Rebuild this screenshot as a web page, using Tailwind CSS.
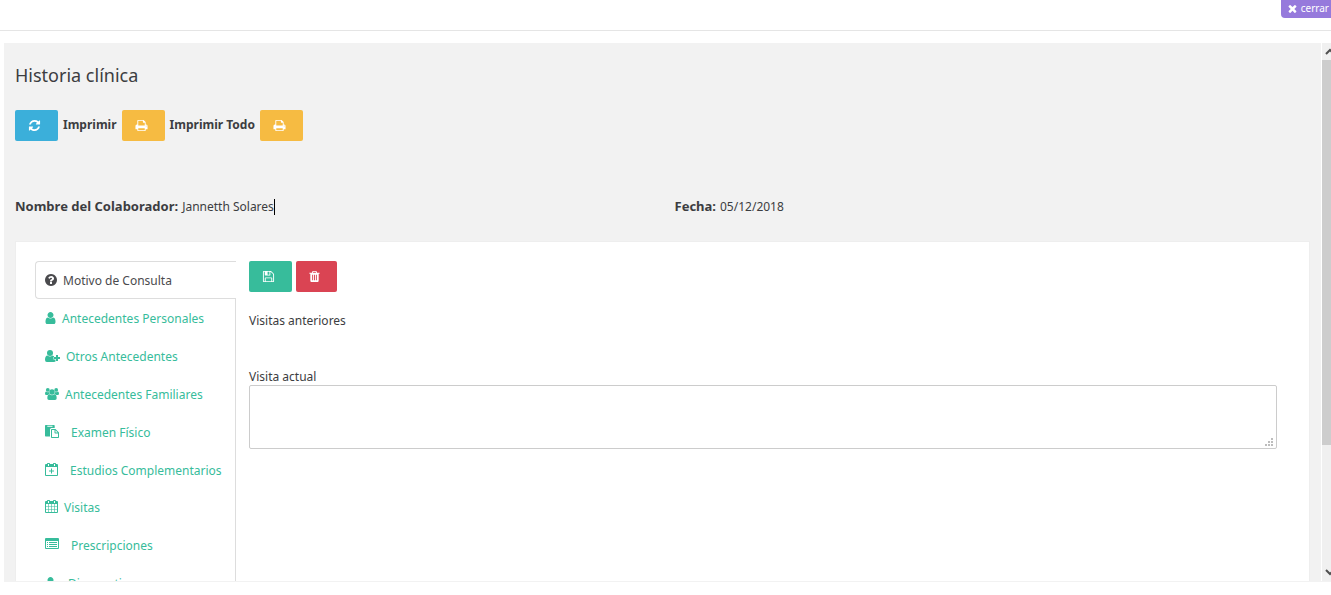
<!DOCTYPE html>
<html lang="es">
<head>
  <meta charset="UTF-8">
  <meta name="viewport" content="width=device-width, initial-scale=1.0">
  <title>Historia clínica</title>
  <script src="https://cdn.jsdelivr.net/npm/@tailwindcss/browser@4"></script>
</head>
<body class="bg-white h-screen overflow-hidden font-['Noto_Sans',sans-serif] text-xs leading-5 text-[#3c3d41]">
  <!-- Barra superior -->
  <header class="flex justify-end items-start h-[31px] border-b border-[#e5e5e5]">
    <button type="button" class="flex items-center gap-1 h-[18px] pb-0.5 pl-[7px] pr-0.5 rounded-bl-sm bg-[#967adc] text-white text-[10px] leading-4">
      <svg class="size-[9px]" viewBox="220 220 1352 1352" fill="currentColor" aria-hidden="true"><path d="M1490 1322q0 40-28 68l-136 136q-28 28-68 28t-68-28l-294-294-294 294q-28 28-68 28t-68-28l-136-136q-28-28-28-68t28-68l294-294-294-294q-28-28-28-68t28-68l136-136q28-28 68-28t68 28l294 294 294-294q28-28 68-28t68 28l136 136q28 28 28 68t-28 68l-294 294 294 294q28 28 28 68z"/></svg>
      cerrar
    </button>
  </header>

  <div class="flex mt-3 ml-1 h-[calc(100vh-56px)] overflow-hidden border-b border-[#f2f2f2]">
    <!-- Contenido -->
    <main class="flex-1 min-w-0 bg-[#f2f2f2] px-[11px] pt-5">
      <h1 class="text-lg leading-6">Historia clínica</h1>

      <div class="flex items-center gap-[5px] mt-[23px] font-bold">
        <button type="button" aria-label="Actualizar" class="flex items-center h-[31px] w-[43px] pl-[13px] rounded-xs bg-[#3bafda] text-white">
          <svg class="size-[13px]" viewBox="0 0 1792 1792" fill="currentColor" aria-hidden="true"><path d="M1639 1056q0 5-1 7-64 268-268 434.500t-478 166.500q-146 0-282.500-55t-243.500-157l-129 129q-19 19-45 19t-45-19-19-45v-448q0-26 19-45t45-19h448q26 0 45 19t19 45-19 45l-137 137q71 66 161 102t187 36q134 0 250-65t186-179q11-17 53-117 8-23 30-23h192q13 0 22.500 9.500t9.500 22.500zm25-800v448q0 26-19 45t-45 19h-448q-26 0-45-19t-19-45 19-45l138-138q-148-137-349-137-134 0-250 65t-186 179q-11 17-53 117-8 23-30 23h-199q-13 0-22.500-9.500t-9.500-22.500v-7q65-268 270-434.500t480-166.500q146 0 284 55.500t245 156.500l130-129q19-19 45-19t45 19 19 45z"/></svg>
        </button>
        <span class="pb-0.5">Imprimir</span>
        <button type="button" aria-label="Imprimir" class="flex items-center h-[31px] w-[43px] pl-[13px] rounded-xs bg-[#f6bb42] text-white">
          <svg class="size-[13px]" viewBox="0 0 1792 1792" fill="currentColor" aria-hidden="true"><path d="M448 1536h896v-256h-896v256zm0-640h896v-384h-160q-40 0-68-28t-28-68v-160h-640v640zm1152 64q0-26-19-45t-45-19-45 19-19 45 19 45 45 19 45-19 19-45zm128 0v416q0 13-9.500 22.500t-22.500 9.500h-224v160q0 40-28 68t-68 28h-960q-40 0-68-28t-28-68v-160h-224q-13 0-22.500-9.500t-9.500-22.500v-416q0-79 56.500-135.500t135.500-56.500h64v-544q0-40 28-68t68-28h672q40 0 88 20t76 48l152 152q28 28 48 76t20 88v256h64q79 0 135.500 56.500t56.500 135.500z"/></svg>
        </button>
        <span class="pb-0.5">Imprimir Todo</span>
        <button type="button" aria-label="Imprimir todo" class="flex items-center h-[31px] w-[43px] pl-[13px] rounded-xs bg-[#f6bb42] text-white">
          <svg class="size-[13px]" viewBox="0 0 1792 1792" fill="currentColor" aria-hidden="true"><path d="M448 1536h896v-256h-896v256zm0-640h896v-384h-160q-40 0-68-28t-28-68v-160h-640v640zm1152 64q0-26-19-45t-45-19-45 19-19 45 19 45 45 19 45-19 19-45zm128 0v416q0 13-9.500 22.500t-22.500 9.500h-224v160q0 40-28 68t-68 28h-960q-40 0-68-28t-28-68v-160h-224q-13 0-22.500-9.500t-9.500-22.500v-416q0-79 56.500-135.500t135.500-56.500h64v-544q0-40 28-68t68-28h672q40 0 88 20t76 48l152 152q28 28 48 76t20 88v256h64q79 0 135.500 56.500t56.500 135.500z"/></svg>
        </button>
      </div>

      <div class="grid grid-cols-2 -mr-6 mt-[55px]">
        <p class="flex items-baseline gap-1"><strong class="text-[13px]">Nombre del Colaborador:</strong><span class="border-r border-black leading-4">Jannetth Solares</span></p>
        <p class="flex items-baseline gap-1"><strong class="text-[13px]">Fecha:</strong><span>05/12/2018</span></p>
      </div>

      <!-- Ficha -->
      <section class="flex mt-6 h-[500px] bg-white border border-[#eeeeee] pt-[19px] pl-[19px] pr-8">
        <nav class="w-[201px] shrink-0 border-r border-[#dddddd] text-[#37bc9b] whitespace-nowrap">
          <a href="#motivo" class="relative flex items-center gap-1.5 h-[38px] -mr-px pt-0.5 pl-[9px] border border-r-0 border-[#dddddd] rounded-l-sm bg-white text-[#4a4a4d]">
            <svg class="w-3 h-3 mb-0.5" viewBox="128 128 1536 1536" fill="currentColor" aria-hidden="true"><path d="M1024 1376v-192q0-14-9-23t-23-9h-192q-14 0-23 9t-9 23v192q0 14 9 23t23 9h192q14 0 23-9t9-23zm256-672q0-88-55.500-163t-138.500-116-170-41q-243 0-371 213-15 24 8 42l132 100q7 6 19 6 16 0 25-12 53-68 86-92 34-24 86-24 48 0 85.500 26t37.500 59q0 38-20 61t-68 45q-63 28-115.500 86.500t-52.500 125.500v36q0 14 9 23t23 9h192q14 0 23-9t9-23q0-19 21.500-49.500t54.500-49.500q32-18 49-28.500t46-35 44.500-48 28-60.500 12.500-81zm384 192q0 209-103 385.500t-279.500 279.500-385.500 103-385.500-103-279.500-279.500-103-385.500 103-385.500 279.500-279.500 385.500-103 385.500 103 279.500 279.500 103 385.500z"/></svg>
            Motivo de Consulta
          </a>
          <a href="#personales" class="flex items-center gap-1.5 h-[38px] pt-0.5 pl-2.5">
            <svg class="w-[11px] h-3 mb-0.5" viewBox="256 128 1280 1536" fill="currentColor" aria-hidden="true"><path d="M1536 1399q0 109-62.500 187t-150.500 78h-854q-88 0-150.500-78t-62.500-187q0-85 8.500-160.500t31.500-152 58.500-131 94-89 134.500-34.500q131 128 313 128t313-128q76 0 134.500 34.500t94 89 58.500 131 31.500 152 8.500 160.500zm-256-887q0 159-112.500 271.500t-271.500 112.500-271.500-112.500-112.500-271.500 112.500-271.500 271.500-112.500 271.500 112.500 112.500 271.500z"/></svg>
            Antecedentes Personales
          </a>
          <a href="#otros" class="flex items-center gap-1.5 h-[38px] pt-0.5 pl-2.5">
            <svg class="w-[15px] h-3 mb-0.5" viewBox="0 0 15 12" fill="currentColor" aria-hidden="true"><circle cx="5" cy="3" r="3"/><path d="M2.500 5.500Q5 7.600 7.500 5.500L9 6.200V7H8.500V9.500H10.500V11.600Q10 12 9 12H1.800Q0 12 0 9.800 0 5.700 2.500 5.500Z"/><path d="M11 5h2v2h2v2h-2v2h-2V9H9V7h2z"/></svg>
            Otros Antecedentes
          </a>
          <a href="#familiares" class="flex items-center gap-1.5 h-[38px] pt-0.5 pl-2.5">
            <svg class="w-3.5 h-3 mb-0.5" viewBox="0 0 14 12" fill="currentColor" aria-hidden="true"><circle cx="2.800" cy="1.900" r="1.900"/><circle cx="11.200" cy="1.900" r="1.900"/><circle cx="7" cy="4" r="2.700"/><path d="M1 3.500Q2.500 4.700 4 4 4.100 5.300 4.700 6 3.500 6.100 3 7H1.300Q0 7 0 5.800 0 3.800 1 3.500ZM13 3.500Q11.500 4.700 10 4 9.900 5.300 9.300 6 10.500 6.100 11 7h1.700Q14 7 14 5.800 14 3.800 13 3.500Z"/><path d="M4.700 6.200Q7 8.200 9.300 6.200 11.700 6.400 11.700 10.200 11.700 12 10 12H4Q2.300 12 2.300 10.200 2.300 6.400 4.700 6.200Z"/></svg>
            Antecedentes Familiares
          </a>
          <a href="#examen" class="flex items-center gap-3 h-[38px] pt-0.5 pl-2.5">
            <svg class="size-3.5 mb-0.5" viewBox="0 0 14 14" fill="currentColor" aria-hidden="true"><path fill-rule="evenodd" d="M.7 0H9q.7 0 .7.700V3H6.500Q5 3 5 4.500V11.500H.7Q0 11.500 0 10.800V.7Q0 0 .7 0ZM2.300.8v1h5.200v-1z"/><path fill-rule="evenodd" d="M6.700 4H10.500L14 7.500V12.300Q14 13 13.300 13H6.700Q6 13 6 12.300V4.700Q6 4 6.700 4ZM7 5V12H13V8.500H10.200Q9.500 8.500 9.500 7.800V5ZM10.500 5.300V7.500H12.700Z"/></svg>
            Examen Físico
          </a>
          <a href="#estudios" class="flex items-center gap-3 h-[37px] pt-0.5 pl-2.5">
            <svg class="w-[13px] h-3.5 mb-0.5" viewBox="0 0 13 14" fill="currentColor" aria-hidden="true"><path fill-rule="evenodd" d="M2 .8Q2 0 2.800 0h1.400q.8 0 .8.800V1h3V.8Q8 0 8.800 0h1.400q.8 0 .8.800V1h1q1 0 1 1v10q0 1-1 1H1q-1 0-1-1V2q0-1 1-1h1ZM3 1V3h1V1ZM9 1V3h1V1ZM1 4v8h11V4Z"/><path d="M6 5.500h1v2h2v1H7v2H6v-2H4v-1h2z"/></svg>
            Estudios Complementarios
          </a>
          <a href="#visitas" class="flex items-center gap-1.5 h-[38px] pt-0.5 pl-2.5">
            <svg class="w-[13px] h-3.5 mb-0.5" viewBox="0 0 13 14" fill="currentColor" aria-hidden="true"><path fill-rule="evenodd" d="M2 .8Q2 0 2.800 0h1.400q.8 0 .8.800V1h3V.8Q8 0 8.800 0h1.400q.8 0 .8.800V1h1q1 0 1 1v10q0 1-1 1H1q-1 0-1-1V2q0-1 1-1h1ZM3 1V3h1V1ZM9 1V3h1V1ZM1 4v2h2.200V4ZM3.800 4v2h2.400V4ZM6.800 4v2h2.400V4ZM9.800 4v2H12V4ZM1 6.600v2.400h2.200V6.600ZM3.800 6.600v2.400h2.400V6.600ZM6.800 6.600v2.400h2.400V6.600ZM9.800 6.600v2.400H12V6.600ZM1 9.600V12h2.200v-2.400ZM3.800 9.600V12h2.400v-2.400ZM6.800 9.600V12h2.400v-2.400ZM9.800 9.600V12H12v-2.400Z"/></svg>
            Visitas
          </a>
          <a href="#prescripciones" class="flex items-center gap-3 h-[38px] pt-0.5 pl-2.5">
            <svg class="size-3.5 mb-0.5" viewBox="0 0 14 14" fill="currentColor" aria-hidden="true"><path fill-rule="evenodd" d="M1 0h12q1 0 1 1v9q0 1-1 1H1q-1 0-1-1V1Q0 0 1 0ZM1 3v7h12V3Z"/><path d="M2 4h1v1H2zM4 4h8v1H4zM2 6h1v1H2zM4 6h8v1H4zM2 8h1v1H2zM4 8h8v1H4z"/></svg>
            Prescripciones
          </a>
          <a href="#diagnosticos" class="flex items-center gap-3 h-[38px] pt-0.5 pl-2.5">
            <svg class="w-[11px] h-3 mb-0.5" viewBox="256 128 1280 1536" fill="currentColor" aria-hidden="true"><path d="M1536 1399q0 109-62.500 187t-150.500 78h-854q-88 0-150.500-78t-62.500-187q0-85 8.500-160.500t31.500-152 58.500-131 94-89 134.500-34.500q131 128 313 128t313-128q76 0 134.500 34.500t94 89 58.500 131 31.500 152 8.500 160.500zm-256-887q0 159-112.500 271.500t-271.500 112.500-271.500-112.500-112.500-271.500 112.500-271.500 271.500-112.500 271.500 112.500 112.500 271.500z"/></svg>
            Diagnosticos
          </a>
        </nav>

        <div class="flex-1 min-w-0 pl-[13px]">
          <div class="flex gap-1">
            <button type="button" aria-label="Guardar" class="flex items-center h-[31px] w-[43px] pl-[13px] rounded-xs bg-[#37bc9b] text-white">
              <svg class="size-[13px]" viewBox="0 0 1792 1792" fill="currentColor" aria-hidden="true"><path d="M512 1536h768v-384h-768v384zm896 0h128v-896q0-14-10-38.500t-20-34.500l-281-281q-10-10-34-20t-39-10v416q0 40-28 68t-68 28h-576q-40 0-68-28t-28-68v-416h-128v1280h128v-416q0-40 28-68t68-28h832q40 0 68 28t28 68v416zm-384-928v-320q0-13-9.500-22.500t-22.500-9.500h-192q-13 0-22.500 9.500t-9.500 22.500v320q0 13 9.500 22.500t22.500 9.500h192q13 0 22.500-9.500t9.500-22.500zm640 32v928q0 40-28 68t-68 28h-1344q-40 0-68-28t-28-68v-1344q0-40 28-68t68-28h928q40 0 88 20t76 48l280 280q28 28 48 76t20 88z"/></svg>
            </button>
            <button type="button" aria-label="Eliminar" class="flex items-center h-[31px] w-[41px] pl-3 rounded-xs bg-[#da4453] text-white">
              <svg class="size-[13px]" viewBox="0 0 1792 1792" fill="currentColor" aria-hidden="true"><path d="M704 1376v-704q0-14-9-23t-23-9h-64q-14 0-23 9t-9 23v704q0 14 9 23t23 9h64q14 0 23-9t9-23zm256 0v-704q0-14-9-23t-23-9h-64q-14 0-23 9t-9 23v704q0 14 9 23t23 9h64q14 0 23-9t9-23zm256 0v-704q0-14-9-23t-23-9h-64q-14 0-23 9t-9 23v704q0 14 9 23t23 9h64q14 0 23-9t9-23zm-544-992h448l-48-117q-7-9-17-11h-317q-10 2-17 11zm928 32v64q0 14-9 23t-23 9h-96v948q0 83-47 143.500t-113 60.500h-832q-66 0-113-58.500t-47-141.500v-952h-96q-14 0-23-9t-9-23v-64q0-14 9-23t23-9h309l70-167q15-37 54-63t79-26h320q40 0 79 26t54 63l70 167h309q14 0 23 9t9 23z"/></svg>
            </button>
          </div>
          <p class="mt-[19px]">Visitas anteriores</p>
          <label for="visita" class="block mt-9">Visita actual</label>
          <div class="relative -mt-0.5">
            <textarea id="visita" class="block w-full h-16 p-2 bg-white border border-[#cccccc] rounded-xs resize-none"></textarea>
            <svg class="absolute right-1 bottom-[3px] size-2 text-[#bdbdbd]" viewBox="0 0 8 8" fill="currentColor" aria-hidden="true"><path d="M6 0h2v2H6zM3 3h2v2H3zM6 3h2v2H6zM0 6h2v2H0zM3 6h2v2H3zM6 6h2v2H6z"/></svg>
          </div>
        </div>
      </section>
    </main>

    <!-- Barra de desplazamiento, cortada por el borde de la ventana -->
    <div class="flex flex-col w-2.5 shrink-0 overflow-hidden border-l border-white bg-[#f0f0f0] text-[#505050]" aria-hidden="true">
      <svg class="w-[17px] h-[17px] shrink-0" viewBox="0 0 17 17" fill="none" stroke="currentColor" stroke-width="2"><path d="M4 11L8 7l4 4"/></svg>
      <div class="h-[385px] bg-[#cdcdcd]"></div>
      <svg class="w-[17px] h-[17px] shrink-0 mt-auto" viewBox="0 0 17 17" fill="none" stroke="currentColor" stroke-width="2"><path d="M4 6l4 4 4-4"/></svg>
    </div>
  </div>
</body>
</html>
